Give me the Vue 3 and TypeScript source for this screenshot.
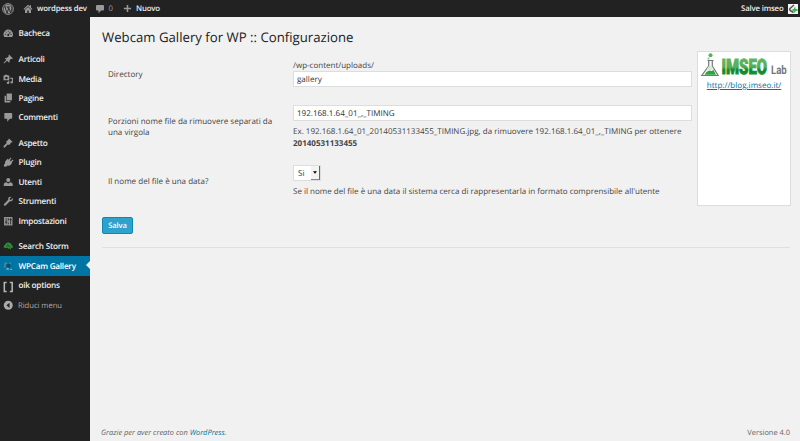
<script setup lang="ts">
import { ref } from 'vue'

interface MenuItem {
  label: string
  icon: string
  gap?: boolean
  current?: boolean
}

const menu: MenuItem[] = [
  { label: 'Bacheca', icon: 'dash' },
  { label: 'Articoli', icon: 'pin', gap: true },
  { label: 'Media', icon: 'media' },
  { label: 'Pagine', icon: 'pages' },
  { label: 'Commenti', icon: 'comment' },
  { label: 'Aspetto', icon: 'brush', gap: true },
  { label: 'Plugin', icon: 'plug' },
  { label: 'Utenti', icon: 'user' },
  { label: 'Strumenti', icon: 'wrench' },
  { label: 'Impostazioni', icon: 'settings' },
  { label: 'Search Storm', icon: 'storm', gap: true },
  { label: 'WPCam Gallery', icon: 'cam', current: true },
  { label: 'oik options', icon: 'oik' },
]

const directory = ref('gallery')
const portions = ref('192.168.1.64_01_,_TIMING')
</script>

<template>
  <div class="page">
    <header class="bar">
      <svg class="wp" viewBox="0 0 20 20">
        <circle cx="10" cy="10" r="9" fill="none" stroke="#999" stroke-width="1.5" />
        <circle cx="10" cy="10" r="7.4" fill="#999" />
        <path d="M3.5 6.5h4M5 7l3.6 10L10.800 10 9.500 7M8.500 6.500h4.500M11 7l3.300 9.500L16.500 9q-.5-2-1.500-3.500" fill="none" stroke="#222" stroke-width="1.500" />
      </svg>
      <svg class="home" viewBox="0 0 20 20">
        <path d="M10 1.500 1 10l1.500 1.500L10 4.500l7.500 7L19 10l-3-2.900V2.500h-2.500v2.200z" />
        <path d="M10 6 4 11.500V18h4.500v-5h3v5H16v-6.500z" />
      </svg>
      <span class="site">wordpess dev</span>
      <svg class="bubble" viewBox="0 0 20 20"><path d="M4 2h12q2 0 2 2v7q0 2-2 2h-4l-5 5.500V13H4q-2 0-2-2V4q0-2 2-2z" /></svg>
      <span class="count">0</span>
      <svg class="plus" viewBox="0 0 20 20"><path d="M8.300 2h3.400v6.300H18v3.400h-6.300V18H8.300v-6.300H2V8.300h6.300z" /></svg>
      <span class="new">Nuovo</span>
      <span class="hello">Salve imseo</span>
      <svg class="avatar" viewBox="0 0 20 20">
        <rect width="20" height="20" fill="#f4f4f4" />
        <path d="M12 2 4 9q-2 3 2 5l5 3" fill="none" stroke="#555" stroke-width="3" />
        <path d="M12 7h3v3h4v4h-4v3h-3v-3H9v-4h3z" fill="#39b54a" />
      </svg>
    </header>

    <div class="body">
      <nav class="side">
        <a v-for="m in menu" :key="m.label" class="item" :class="{ gap: m.gap, current: m.current }">
          <svg class="icon" viewBox="0 0 20 20" :class="m.icon">
            <template v-if="m.icon === 'dash'">
              <path d="M10 3a9 9 0 0 0-9 9q0 3 1.500 5h15q1.500-2 1.500-5a9 9 0 0 0-9-9z" />
              <path d="M10 5v2M5 7l1.500 1.500M3.500 12H6M14 12h2.500M14.500 7 10 13" fill="none" stroke="#222" stroke-width="1.600" />
              <circle cx="10" cy="13.500" r="2" fill="#222" />
            </template>
            <path v-else-if="m.icon === 'pin'" d="m11.500 1 7.500 7.500-2 1-1.500-.5-3 3q.7 3-1 4.500L8 13l-6 5-1-1 5.500-6L3.500 8q2-1.500 4.500-.8l3-3-.5-1.600z" />
            <template v-else-if="m.icon === 'media'">
              <path d="M1 3h2l1-1.500h4L9 3h3v9H1zM6.500 5a2.500 2.500 0 1 0 .01 0z" fill-rule="evenodd" />
              <path d="M14 7h5v9a2.500 2 0 1 1-2-2V9.500h-3zM12 13v4a2.500 2 0 1 1-2-2v-2z" />
            </template>
            <template v-else-if="m.icon === 'pages'">
              <path d="M7 1h10v13H7z" /><path d="M3 5h3v10h8v3H3z" />
            </template>
            <path v-else-if="m.icon === 'comment'" d="M4 2h12q1.500 0 1.500 1.500V11q0 2-1.500 2h-3l-5 5.500V13H4q-1.500 0-1.500-2V3.500Q2.500 2 4 2z" />
            <path v-else-if="m.icon === 'brush'" d="m11.500 1 7 6.500-3 1.300-3.500 4.500-3-.7-6 5.900-2-1 .3-2.500L7 9.500 6 6.800 9.800 4z" />
            <path v-else-if="m.icon === 'plug'" d="m11 5 3.500-4 1.500 1.300-3 4 2 1.900 3.500-3.400L20 6.500 16.500 10l1 1-3 4q-3 2.500-6 1l-2.500 2.500L2 18l-.5-3L4 12.500Q2.500 9 6 6l3-2.800z" />
            <template v-else-if="m.icon === 'user'">
              <circle cx="10" cy="5.500" r="3.800" />
              <path d="M1.500 17v-3q0-4 5-4l3.500 2.500L13.500 10q5 0 5 4v3z" />
            </template>
            <path v-else-if="m.icon === 'wrench'" d="m16 2-3.500 3 .5 2 2 .5L18.500 4q1 3-1 5-2 1.700-4.500 1L5 18q-1.500 1-3 0-1-1.500 0-3l8-8q-.6-3 1-4.500Q13 1 16 2z" />
            <template v-else-if="m.icon === 'settings'">
              <path d="M2 2h16v16H2z" />
              <path d="M6 4v12M3.800 11.500h4.400M10 4v5M10 12v4M14.500 4v12M12.200 7h4.500" stroke="#222" stroke-width="1.600" fill="none" />
            </template>
            <template v-else-if="m.icon === 'storm'">
              <path d="M1 12q0-4 3-5 1-4 6-4t6.500 4Q19 9 19 13l-4 .5 1 3.500-4-3-2 1-1-2-4 1z" fill="#2f8a35" />
              <path d="m8 6 4 5M6 11l4-3 5 4" stroke="#195b20" stroke-width="1.500" fill="none" />
            </template>
            <template v-else-if="m.icon === 'cam'">
              <path d="M3 3h5v3H5v7H2V6zM12 3h3v3h-3z" fill="#4289a8" />
              <circle cx="10.500" cy="9" r="4" fill="#174b65" />
              <path d="m5 16 4-3 4 3zM15 14l3 3h-4z" fill="#8ebed2" />
            </template>
            <path v-else d="M1 0h6v3H4v14h3v3H1zM13 0h6v20h-6v-3h3V3h-3z" fill="#b4b4b4" />
          </svg>
          <span>{{ m.label }}</span>
        </a>
        <a class="item fold">
          <svg class="icon" viewBox="0 0 20 20">
            <circle cx="10" cy="10" r="8.500" fill="#aaa" /><path d="M12.500 5v10L6.500 10z" fill="#222" />
          </svg>
          <span>Riduci menu</span>
        </a>
      </nav>

      <main class="main">
        <h2>Webcam Gallery for WP :: Configurazione</h2>
        <div class="columns">
          <form class="form" @submit.prevent>
            <div class="row first">
              <label>Directory</label>
              <div class="field">
                <p class="path">/wp-content/uploads/</p>
                <input v-model="directory" class="dir" type="text" />
              </div>
            </div>
            <div class="row second">
              <label class="long">Porzioni nome file da rimuovere separati da<br />una virgola</label>
              <div class="field">
                <input v-model="portions" type="text" />
                <p class="hint ex">Ex. 192.168.1.64_01_20140531133455_TIMING.jpg, da rimuovere 192.168.1.64_01_,_TIMING per ottenere<br /><b>20140531133455</b></p>
              </div>
            </div>
            <div class="row third">
              <label>Il nome del file è una data?</label>
              <div class="field">
                <div class="select"><span>Si</span><i><svg viewBox="0 0 5 3"><path d="M0 0h5L2.500 3z" /></svg></i></div>
                <p class="hint date">Se il nome del file è una data il sistema cerca di rappresentarla in formato comprensibile all'utente</p>
              </div>
            </div>
            <button class="save">Salva</button>
          </form>
          <aside class="promo">
            <svg class="logo" viewBox="0 0 88 24">
              <defs>
                <linearGradient id="green" x1="0" y1="0" x2="0" y2="1">
                  <stop offset="0" stop-color="#64b967" /><stop offset=".48" stop-color="#4fae56" />
                  <stop offset=".6" stop-color="#0b892b" /><stop offset="1" stop-color="#2a9d3b" />
                </linearGradient>
              </defs>
              <circle cx="10.500" cy="2.300" r="2" fill="#55b45b" /><circle cx="8.500" cy="5.500" r="1" fill="#77c57a" />
              <path d="M7.500 7.500h6M8.700 8v5L1.800 22.500h16.400L12.300 13V8" fill="#f7faf7" stroke="#777" stroke-width="1.200" />
              <path d="M6.500 19q2.500-2.500 5-1l2-1 2.500 4.700H4.500z" fill="#2ba43c" />
              <path d="m6.500 16.500 2.800-4h2.200l2 3.500q-3.500 2-7 .5z" fill="#d3ead3" />
              <text transform="translate(21.500 20.500) scale(.71 1)" class="brand">IMSEO</text>
              <text transform="translate(71 20.500) scale(.8 1)" class="lab">Lab</text>
            </svg>
            <a>http://blog.imseo.it/</a>
          </aside>
        </div>
        <hr />
        <footer>
          <span class="thanks">Grazie per aver creato con <a>WordPress</a>.</span>
          <span class="version">Versione 4.0</span>
        </footer>
      </main>
    </div>
  </div>
</template>

<style>
body { margin: 0; }
</style>

<style scoped>
.page { width: 800px; height: 441px; display: flex; flex-direction: column; background: #f1f1f1; color: #444; font: 8px/12px "Open Sans", sans-serif; overflow: hidden; text-rendering: geometricPrecision; }
.page * { box-sizing: border-box; text-rendering: geometricPrecision; }
svg { display: block; fill: #999; flex: none; overflow: visible; }
p, h2 { margin: 0; }
.bar { height: 17px; flex: none; display: flex; align-items: center; background: #222; color: #eee; padding: 0 2px; font-size: 7.800px; letter-spacing: -0.170px; white-space: nowrap; }
.bar span { font-weight: 600; padding-top: 1px; }
.wp { width: 12px; height: 12px; }
.home { width: 10px; height: 10px; margin-left: 9px; }
.site { width: 49px; margin-left: 4px; }
.bubble { width: 10px; height: 10px; margin-left: 8.500px; }
.bar .count { margin-left: 4px; width: 5px; color: #999; font-weight: 400; }
.plus { width: 9px; height: 9px; margin-left: 9px; }
.new { margin-left: 4.500px; }
.hello { margin-left: auto; }
.avatar { width: 10px; height: 10px; margin-left: 4px; margin-right: 0.500px; }
.body { display: flex; flex: 1; min-height: 0; }
.side { width: 90px; flex: none; background: #222; padding-top: 7px; }
.item { position: relative; display: flex; align-items: center; height: 19.450px; padding-left: 3px; color: #eee; font-size: 8.200px; letter-spacing: -0.250px; font-weight: 600; white-space: nowrap; }
.item span { padding-top: 1.500px; }
.item .icon { width: 10.500px; height: 10.500px; margin-right: 5px; }
.item .icon.oik { width: 10.500px; height: 12px; margin-right: 5.500px; margin-left: -0.500px; position: relative; top: 1.500px; }
.item.gap { margin-top: 6.200px; }
.item.current { background: #0074a2; color: #fff; }
.item.current::after { content: ""; position: absolute; right: 0; top: 5px; border: 4.700px solid transparent; border-right-color: #f1f1f1; border-left: 0; }
.item.fold { color: #aaa; font-weight: 400; font-size: 7.700px; letter-spacing: -0.050px; }
.fold span { margin-left: -0.500px; }
.main { flex: 1; display: flex; flex-direction: column; padding: 11px 9px 3px 12px; min-width: 0; }
h2 { font-size: 13.200px; line-height: 18px; font-weight: 400; color: #222; white-space: nowrap; }
.columns { display: flex; justify-content: space-between; height: 201px; padding-top: 5px; }
.form { width: 590px; padding-left: 6px; }
.row { display: flex; align-items: center; white-space: nowrap; }
.row label { width: 185px; flex: none; font-size: 8.050px; line-height: 11.600px; }
.field { flex: 1; }
.first { height: 47px; align-items: flex-start; }
.first label { padding-top: 18px; }
.first .field { padding-top: 8px; }
.second { height: 59px; align-items: flex-start; padding-top: 7px; }
.second label { padding-top: 10.500px; }
.third { height: 60px; align-items: flex-start; padding-top: 8px; }
.third label { padding-top: 10.500px; }
input { display: block; width: 399px; height: 16px; border: 1px solid #ddd; background: #fff; color: #333; padding: 0 3px; font: 8.050px "Open Sans", sans-serif; outline: 0; }
.path { height: 12px; padding-top: 1px; }
.hint { font-size: 8.030px; padding-top: 5px; line-height: 12px; }
.select { display: flex; width: 28px; height: 16px; border: 1px solid #ddd; background: #fff; color: #333; font-size: 8.050px; line-height: 16px; padding-left: 4px; justify-content: space-between; }
.select i { width: 9px; background: #f3f3f3; border-right: 1px solid #666; border-bottom: 1px solid #888; display: flex; align-items: center; justify-content: center; }
.select svg { width: 4px; height: 3px; fill: #000; }
.save { display: block; margin-left: -6px; width: 31px; height: 16.500px; padding: 1px 0 0; border: 1px solid #0f86b4; border-radius: 2px; background: #2ea2cc; color: #fff; font: 600 7.600px "Open Sans", sans-serif; letter-spacing: -0.100px; }
.promo { width: 94px; height: 155px; flex: none; border: 1px solid #ddd; background: #fff; display: flex; flex-direction: column; align-items: center; }
.promo a { color: #0074a2; text-decoration: underline; font-size: 8.050px; line-height: 12px; margin-top: 3px; }
.logo { width: 88px; height: 24px; margin-top: 1px; }
.brand { font: 900 21px Roboto, sans-serif; fill: url(#green); stroke: url(#green); stroke-width: 1px; }
.lab { font: 700 12px Roboto, sans-serif; fill: #777; }
hr { width: 688px; height: 1px; margin: 0; border: 0; background: #dfdfdf; flex: none; }
footer { margin-top: auto; display: flex; justify-content: space-between; color: #666; font-size: 7.450px; padding-top: 1px; margin-bottom: -1px; }
.thanks { font-style: italic; margin-left: -1px; }
.thanks a { color: #0074a2; }
.version { margin-right: 1px; }
</style>
